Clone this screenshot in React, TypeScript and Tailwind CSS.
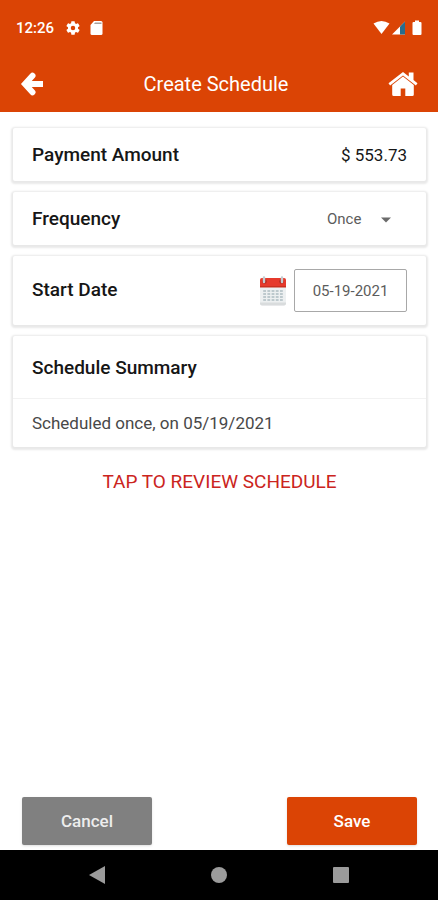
import { useState } from "react";
import type { ReactNode } from "react";

interface CardProps {
  children: ReactNode;
  className?: string;
}

function Card({ children, className = "" }: CardProps) {
  return (
    <section className={`${className} bg-white rounded-xs shadow-[0_1px_2px_2px_rgba(0,0,0,0.09)]`}>
      {children}
    </section>
  );
}

function StatusBar() {
  return (
    <div className="flex items-center h-14 px-4 text-white">
      <span className="text-[15px] font-medium">12:26</span>
      <svg className="ml-3 size-3.5" viewBox="2 2 20 20" fill="currentColor" aria-hidden="true">
        <path d="M19.14 12.94c.04-.3.06-.61.06-.94s-.02-.64-.07-.94l2.03-1.58a.49.49 0 0 0 .12-.61l-1.92-3.32a.49.49 0 0 0-.59-.22l-2.39.96a7 7 0 0 0-1.62-.94l-.36-2.54A.48.48 0 0 0 13.92 2.4h-3.84a.48.48 0 0 0-.48.41l-.36 2.54a7 7 0 0 0-1.62.94l-2.39-.96a.48.48 0 0 0-.59.22L2.74 8.87a.48.48 0 0 0 .12.61l2.03 1.58a6 6 0 0 0 0 1.88l-2.03 1.58a.49.49 0 0 0-.12.61l1.92 3.32c.12.22.37.29.59.22l2.39-.96c.5.38 1.03.7 1.62.94l.36 2.54c.05.24.24.41.48.41h3.84c.24 0 .44-.17.47-.41l.36-2.54a7 7 0 0 0 1.62-.94l2.39.96c.22.08.47 0 .59-.22l1.92-3.32a.48.48 0 0 0-.12-.61zM12 15.2a3.2 3.2 0 1 1 0-6.400 3.2 3.2 0 0 1 0 6.400z" />
      </svg>
      <svg className="ml-2 w-4 h-4" viewBox="0 0 16 16" aria-hidden="true">
        <path d="M6 1h7q1.500 0 1.500 1.500v11q0 1.500-1.500 1.500H4q-1.500 0-1.500-1.500V5z" fill="#fff" />
        <path d="M7 2.600h6.500V4H6z" fill="#a8a09c" />
      </svg>
      <div className="flex items-center ml-auto">
        <svg className="w-[17px] h-4" viewBox="0 0 17 16" aria-hidden="true">
          <path d="M.5 3.500Q8.500-1.500 16.500 3.500L8.500 14z" fill="#fff" />
        </svg>
        <svg className="ml-0.5 w-[14px] h-4" viewBox="0 0 14 16" aria-hidden="true">
          <path d="M0 14.500 13 1.500v13z" fill="#fff" />
          <path d="M8 6.500l5-5v13H8z" fill="#286c8c" />
        </svg>
        <svg className="ml-1.5 w-[10px] h-4" viewBox="0 0 10 16" aria-hidden="true">
          <path d="M3 .5h4V2h1.500q1 0 1 1v11q0 1-1 1h-7q-1 0-1-1V3q0-1 1-1H3z" fill="#fff" />
        </svg>
      </div>
    </div>
  );
}

function CalendarIcon() {
  return (
    <svg className="w-[26px] h-[30px]" viewBox="0 0 26 30" aria-hidden="true">
      <path d="M0 9h26v18.500q0 2-2 2H2q-2 0-2-2z" fill="#edf0f1" />
      <path d="M0 27.500q0 2 2 2h22q2 0 2-2v-1H0z" fill="#d9dcdd" />
      <path d="M0 4q0-2 2-2h22q2 0 2 2v7H0z" fill="#e63a2c" />
      <path d="M0 10h26v1.500H0z" fill="#c9301f" />
      <g fill="#bdc9cd">
        {[14, 17, 20, 23].map((y) =>
          [3.2, 7.4, 11.6, 15.8, 20].map((x) => <rect key={`${x}-${y}`} x={x} y={y} width="2.800" height="2" />)
        )}
      </g>
      <circle cx="4.500" cy="5.500" r="2.300" fill="#b52b20" />
      <circle cx="21.500" cy="5.500" r="2.300" fill="#b52b20" />
      <path d="M4 6V1.500M22 6V1.500" stroke="#c4ccd0" strokeWidth="2.400" strokeLinecap="round" />
    </svg>
  );
}

function App() {
  const [frequency, setFrequency] = useState("Once");
  const [startDate, setStartDate] = useState("05-19-2021");

  return (
    <div className="flex flex-col min-h-screen bg-white font-[Roboto,sans-serif] text-[#161616]">
      <header className="bg-[#db4405] text-white">
        <StatusBar />
        <div className="flex items-center justify-between h-14 px-5">
          <button aria-label="Back">
            <svg className="w-6 h-6" viewBox="0 0 24 24" fill="none" stroke="currentColor" aria-hidden="true">
              <path d="M6 12h17" strokeWidth="6" />
              <path d="M12.500 3.700 5 12l7.500 8.300" strokeWidth="6" strokeLinecap="round" />
            </svg>
          </button>
          <h1 className="text-xl">Create Schedule</h1>
          <button aria-label="Home">
            <svg className="w-[30px] h-6" viewBox="0 0 30 24" fill="currentColor" aria-hidden="true">
              <path d="M15 0 .5 11.300l1.600 2.100L15 3.400l12.900 10 1.600-2.100-4-3.200V.5h-4.700v4z" />
              <path d="M15 4.600 4.200 13v9.500q0 1.500 1.500 1.500h7v-7.500h4.600V24h7q1.500 0 1.500-1.500V13z" />
            </svg>
          </button>
        </div>
      </header>

      <main className="flex flex-col flex-1 gap-[11px] pl-[13px] pr-3 pt-4">
        <Card className="flex items-center justify-between h-[53px] pt-0.5 px-[19px]">
          <h2 className="text-[19px] font-medium">Payment Amount</h2>
          <p className="text-[17px]">$ 553.73</p>
        </Card>

        <Card className="flex items-center justify-between h-[53px] pt-0.5 px-[19px]">
          <label htmlFor="frequency" className="text-[19px] font-medium">Frequency</label>
          <div className="relative">
            <select
              id="frequency"
              value={frequency}
              onChange={(e) => setFrequency(e.target.value)}
              className="block w-20 appearance-none bg-transparent text-[15px] text-[#5c5c5c]"
            >
              <option>Once</option>
              <option>Weekly</option>
              <option>Monthly</option>
            </select>
            <svg className="absolute right-4 top-1/2 -translate-y-1/2 w-[10px] h-1.5 pointer-events-none" viewBox="0 0 10 6" aria-hidden="true">
              <path d="M0 .5h10L5 5.500z" fill="#6b6b6b" />
            </svg>
          </div>
        </Card>

        <Card className="flex items-center h-[69px] px-[19px]">
          <label htmlFor="start-date" className="mr-auto text-[19px] font-medium">Start Date</label>
          <CalendarIcon />
          <input
            id="start-date"
            type="text"
            value={startDate}
            onChange={(e) => setStartDate(e.target.value)}
            className="ml-2 w-[113px] h-[43px] border border-[#a8a8a8] rounded-xs text-center text-[15px] text-[#5c5c5c]"
          />
        </Card>

        <Card>
          <h2 className="px-[19px] pt-[18px] pb-4 text-[19px] leading-7 font-medium border-b border-[#f2f2f2]">
            Schedule Summary
          </h2>
          <p className="px-[19px] py-3 text-[17px] leading-6 text-[#484848]">Scheduled once, on 05/19/2021</p>
        </Card>

        <button className="self-center mt-2 text-[19px] leading-8 text-[#cb2420]">TAP TO REVIEW SCHEDULE</button>
      </main>

      <footer>
        <div className="flex justify-between pl-[22px] pr-[21px] pb-[5px]">
          <button className="w-[130px] h-12 pt-0.5 bg-[#808080] rounded-xs shadow-sm text-[17px] font-medium text-[#ededed]">
            Cancel
          </button>
          <button className="w-[130px] h-12 pt-0.5 bg-[#db4405] rounded-xs shadow-sm text-[17px] font-medium text-white">
            Save
          </button>
        </div>
        <nav className="flex items-center justify-center gap-[104px] h-[50px] bg-black text-[#9b9b9b]">
          <button aria-label="System back">
            <svg className="w-[18px] h-[18px]" viewBox="0 0 18 18" fill="currentColor" aria-hidden="true">
              <path d="M17 0v18L1 9z" />
            </svg>
          </button>
          <button aria-label="System home">
            <svg className="w-[18px] h-[18px]" viewBox="0 0 18 18" fill="currentColor" aria-hidden="true">
              <circle cx="9" cy="9" r="8" />
            </svg>
          </button>
          <button aria-label="Recent apps">
            <svg className="w-[18px] h-[18px]" viewBox="0 0 18 18" fill="currentColor" aria-hidden="true">
              <rect x="1" y="1" width="16" height="16" rx="1" />
            </svg>
          </button>
        </nav>
      </footer>
    </div>
  );
}

export default App;
